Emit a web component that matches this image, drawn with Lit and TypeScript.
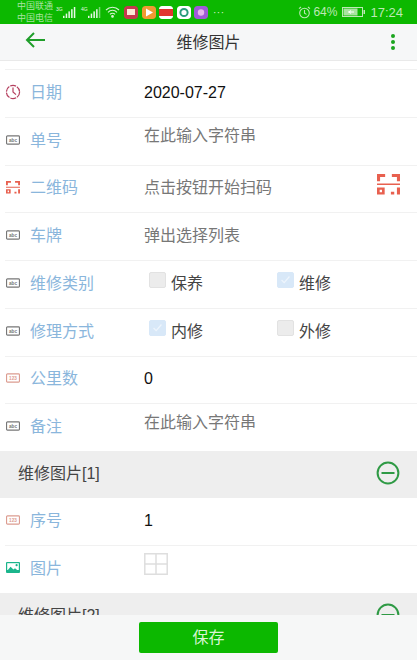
import { LitElement, html, css, svg } from "lit";
import { customElement } from "lit/decorators.js";

const abc = (label: string, color: string) => html`<svg class="ico" viewBox="0 0 15 10" width="14" height="10">
  <rect x="0.6" y="0.6" width="13.8" height="8.8" rx="1" fill="#fff" stroke="${color}" stroke-width="1.2"></rect>
  <text x="7.5" y="6.9" text-anchor="middle" font-size="5" font-weight="700" font-family="Liberation Sans, sans-serif" fill="${color}">${label}</text>
</svg>`;

const clock = html`<svg class="ico clock" viewBox="0 0 16 16" width="16" height="16" fill="none" stroke="#b5405f" stroke-width="1.2">
  <circle cx="8" cy="8" r="6.6" stroke-dasharray="6 1"></circle><path d="M8 3.6V8l3 2.6"></path></svg>`;

const scan = (s: number) => html`<svg class="ico" viewBox="0 0 24 22" width="${s}" height="${(s * 22) / 24}" fill="#e8604f">
  <path d="M0 0h8.5v3.2H3.2V7.5H0zM15.5 0H24v7.5h-3.2V3.2h-5.3zM0 9.8h24v1.8H0zM0 14h8v7.5H0zM2.8 16.4v2.7h2.4v-2.7zM20.8 14H24v7.5h-3.2zM14.5 18.4H18v3.1h-3.5z"></path></svg>`;

const picture = html`<svg class="ico" viewBox="0 0 14 11" width="14" height="11">
  <rect width="14" height="11" rx="1" fill="#1bb58c"></rect><rect x="1.2" y="1.2" width="11.6" height="6.8" fill="#fff"></rect>
  <circle cx="10.6" cy="3.2" r="1.1" fill="#1bb58c"></circle><path d="M1 9l3.6-4.2L7.4 7.6 9 6.2 13 9.4V11H1z" fill="#1bb58c"></path></svg>`;

const minus = html`<svg class="minus" viewBox="0 0 24 24" width="24" height="24" fill="none" stroke="#2f9a45" stroke-width="2">
  <circle cx="12" cy="12" r="10.4"></circle><path d="M5.5 12h13"></path></svg>`;

const grid = html`<svg viewBox="0 0 24 22" width="24" height="22" fill="none" stroke="#dedede" stroke-width="1.5">
  <path d="M.8.8h22.4v20.4H.8zM12 .8v20.4M.8 11h22.4"></path></svg>`;

const bars = (n: number) => svg`${[0, 1, 2, 3, 4].map((i) =>
  svg`<rect x="${i * 2.7}" y="${11 - (i + 1) * 2.2}" width="1.5" height="${(i + 1) * 2.2}" fill="#fff" opacity="${i < n ? 0.9 : 0.45}"></rect>`)}`;

@customElement("app-root")
export class AppRoot extends LitElement {
  static styles = css`
    :host { display: block; }
    * { box-sizing: border-box; }
    .page { width: 417px; height: 660px; display: flex; flex-direction: column; overflow: hidden; background: #fff;
      font-family: "Liberation Sans", "Noto Sans CJK SC", sans-serif; }
    .status { height: 24px; flex: none; background: #0cb800; color: #cdeec8; display: flex; align-items: center; padding: 0 14px 0 17px; }
    .carriers { font-size: 9px; line-height: 12px; width: 39px; flex: none; white-space: nowrap; color: #a8e3a0; }
    .sig { display: flex; align-items: flex-end; width: 20px; margin-right: 5px; font-size: 5px; color: #e4f7e0; }
    .sig span { align-self: flex-start; width: 7px; flex: none; margin-top: -1px; }
    .wifi { margin-left: -1px; flex: none; }
    .apps { display: flex; gap: 3.5px; margin-left: 4px; align-items: center; }
    .app { width: 14px; height: 13px; border-radius: 3px; display: block; }
    .dots { margin-left: 5px; font-size: 10px; letter-spacing: .5px; color: #d8f3d3; }
    .right { margin-left: auto; display: flex; align-items: center; gap: 2px; font-size: 12px; color: #bde8b6; }
    .right .pct { margin-right: 3px; }
    .time { font-size: 13px; margin-left: 3px; }
    .nav { height: 37px; flex: none; background: #f6f7f8; display: flex; align-items: center; justify-content: space-between; padding: 0 22px 0 25px; border-bottom: 1px solid #e9e9e9; position: relative; }
    .nav .title { position: absolute; left: 0; right: 0; text-align: center; font-size: 16px; color: #333; top: 9px; line-height: 20px; }
    .back { margin-top: -5px; }
    .kebab { display: flex; flex-direction: column; gap: 2px; }
    .kebab i { width: 4px; height: 4px; border-radius: 50%; background: #1ba51f; display: block; }
    .scroll { flex: 1; min-height: 0; overflow: hidden; padding-top: 8px; }
    .row { height: 47.75px; margin-left: 5px; padding-bottom: 3px; display: flex; align-items: center; border-top: 1px solid #f1f1f1; }
    .row.nb { border-top: none; margin-left: 0; padding-left: 5px; height: 47px; }
    .icon { width: 25px; padding-left: 1px; flex: none; display: flex; align-items: center; }
    .ico { display: block; }
    .clock { margin-left: -1px; }
    .label { width: 114px; flex: none; font-size: 16px; color: #8ab6dc; margin-top: -2px; }
    .val { flex: 1; font-size: 16px; color: #111; margin-top: 2px; }
    .ph { flex: 1; font-size: 16px; color: #777; margin-top: -11px; }
    .ph.c { margin-top: -2px; }
    .scanbtn { margin: -6px 17px 0 0; }
    .checks { flex: 1; display: grid; grid-template-columns: 128px 1fr; padding-left: 5px; margin-top: -2px; }
    .check { display: flex; align-items: center; gap: 5px; font-size: 16px; color: #444; }
    .box { width: 17px; height: 16px; border-radius: 2px; background: #ececec; border: 1px solid #e2e2e2; margin-top: -4px; display: block; }
    .box.on { background: #d8e8f8; border-color: #d8e8f8; }
    .box svg { display: block; }
    .head { height: 47px; background: #eee; display: flex; align-items: center; justify-content: space-between; padding: 0 17px 3px 18px; font-size: 16px; color: #444; }
    .head span { margin-top: -2px; }
    .grid { flex: 1; margin-top: -7px; }
    .grid svg { display: block; }
    .footer { height: 45px; flex: none; background: #f6f7f7; display: flex; justify-content: center; padding-top: 7px; position: relative; }
    .save { width: 139px; height: 31px; background: #0cb800; border: none; border-radius: 2px; color: #d9f5d4; font: inherit; font-size: 16px; padding: 0 0 3px; }
  `;

  private row(icon: unknown, label: string, body: unknown, cls = "") {
    return html`<div class="row ${cls}"><div class="icon">${icon}</div><div class="label">${label}</div>${body}</div>`;
  }

  private checks(a: string, aOn: boolean, b: string, bOn: boolean) {
    const c = (t: string, on: boolean) => html`<div class="check"><span class="box ${on ? "on" : ""}">${on
      ? html`<svg viewBox="0 0 17 16" width="15" height="14" fill="none" stroke="#eef5fc" stroke-width="1.4"><path d="M4 8l3 3 6-7"></path></svg>` : ""}</span>${t}</div>`;
    return html`<div class="checks">${c(a, aOn)}${c(b, bOn)}</div>`;
  }

  render() {
    const grey = "#777";
    const red = "#dc9c90";
    return html`<div class="page">
      <div class="status">
        <div class="carriers">中国联通<br />中国电信</div>
        <div class="sig"><span>3G</span><svg width="13" height="11" viewBox="0 0 13 11">${bars(5)}</svg></div>
        <div class="sig"><span>4G</span><svg width="13" height="11" viewBox="0 0 13 11">${bars(4)}</svg></div>
        <svg class="wifi" width="15" height="12" viewBox="0 0 15 12" fill="none" stroke="#d8f3d3" stroke-width="1.1">
          <path d="M1 4a9 9 0 0 1 13 0M3 6.3a6 6 0 0 1 9 0M5 8.4a3.2 3.2 0 0 1 5 0"></path><circle cx="7.5" cy="10.4" r=".8" fill="#d8f3d3"></circle></svg>
        <div class="apps">
          <svg class="app" viewBox="0 0 14 13"><rect width="14" height="13" rx="3" fill="#c43a4e"></rect><rect x="3" y="3" width="8" height="6" fill="#fbe9d8"></rect></svg>
          <svg class="app" viewBox="0 0 14 13"><rect width="14" height="13" rx="3" fill="#f09a33"></rect><path d="M4 2.5l7 4-7 4z" fill="#fff"></path></svg>
          <svg class="app" viewBox="0 0 14 13"><rect width="14" height="13" rx="2" fill="#fff"></rect><rect y="3" width="14" height="7" fill="#e2342f"></rect></svg>
          <svg class="app" viewBox="0 0 14 13"><rect width="14" height="13" rx="3" fill="#fff"></rect><circle cx="7" cy="6.5" r="3.6" fill="none" stroke="#2b9d7b" stroke-width="2"></circle></svg>
          <svg class="app" viewBox="0 0 14 13"><rect width="14" height="13" rx="3" fill="#a05ad8"></rect><circle cx="7" cy="6.5" r="3.2" fill="#e9b6ee"></circle></svg>
        </div>
        <span class="dots">···</span>
        <div class="right">
          <svg width="13" height="13" viewBox="0 0 13 13" fill="none" stroke="#bde8b6" stroke-width="1.1"><circle cx="6.5" cy="7" r="4.8"></circle><path d="M6.5 4v3.2l2 1.2M1 2.6L3 1M12 2.6L10 1"></path></svg>
          <span class="pct">64%</span>
          <svg width="23" height="10" viewBox="0 0 23 10"><rect x=".5" y=".5" width="20" height="9" fill="none" stroke="#bde8b6"></rect><rect x="1.5" y="1.5" width="14" height="7" fill="#a8e3a0"></rect><path d="M6 5h6M9 3.5l-2 1.5 2 1.5" stroke="#fff" fill="none"></path><rect x="21.5" y="3" width="1.5" height="4" fill="#bde8b6"></rect></svg>
          <span class="time">17:24</span>
        </div>
      </div>
      <div class="nav">
        <svg class="back" width="20" height="16" viewBox="0 0 20 16" fill="none" stroke="#1f9e2a" stroke-width="2"><path d="M20 8H2M9 1L2 8l7 7"></path></svg>
        <div class="title">维修图片</div>
        <div class="kebab"><i></i><i></i><i></i></div>
      </div>
      <div class="scroll">
        ${this.row(clock, "日期", html`<div class="val">2020-07-27</div>`)}
        ${this.row(abc("abc", grey), "单号", html`<div class="ph">在此输入字符串</div>`)}
        ${this.row(scan(14), "二维码", html`<div class="ph c">点击按钮开始扫码</div><div class="scanbtn">${scan(23)}</div>`)}
        ${this.row(abc("abc", grey), "车牌", html`<div class="ph c">弹出选择列表</div>`)}
        ${this.row(abc("abc", grey), "维修类别", this.checks("保养", false, "维修", true))}
        ${this.row(abc("abc", grey), "修理方式", this.checks("内修", true, "外修", false))}
        ${this.row(abc("123", red), "公里数", html`<div class="val">0</div>`)}
        ${this.row(abc("abc", grey), "备注", html`<div class="ph">在此输入字符串</div>`)}
        <div class="head"><span>维修图片[1]</span>${minus}</div>
        ${this.row(abc("123", red), "序号", html`<div class="val">1</div>`, "nb")}
        ${this.row(picture, "图片", html`<div class="grid">${grid}</div>`)}
        <div class="head"><span>维修图片[2]</span>${minus}</div>
      </div>
      <div class="footer"><button class="save">保存</button></div>
    </div>`;
  }
}
